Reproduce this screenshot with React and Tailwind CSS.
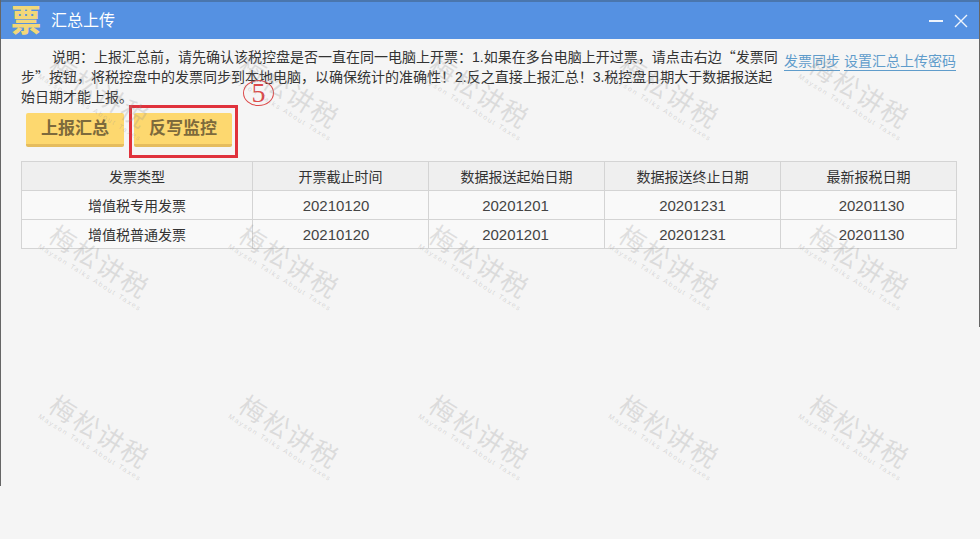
import React from "react";

const FONT = { fontFamily: '"Liberation Sans", "Noto Sans CJK SC", sans-serif' };

const rows = [
  ["增值税专用发票", "20210120", "20201201", "20201231", "20201130"],
  ["增值税普通发票", "20210120", "20201201", "20201231", "20201130"],
];
const head = ["发票类型", "开票截止时间", "数据报送起始日期", "数据报送终止日期", "最新报税日期"];
const digitOffset = ["", "pr-[9px]", "pr-[2px]", "", "pl-[6px]"];

const wmX = [45, 235, 425, 615, 805];
const wmY = [79, 249, 419];

function Watermark({ left, top }) {
  return (
    <div
      className="absolute w-[104px] origin-center rotate-[32deg] text-center leading-none pointer-events-none"
      style={{ left, top }}
    >
      <div className="-ml-[8px] w-[120px] text-[26px] font-normal tracking-[2px] text-[#8f8f8f]/25 whitespace-nowrap">梅松讲税</div>
      <div className="mt-[1px] -ml-[8px] w-[120px] text-[7px] tracking-[1.6px] text-[#8f8f8f]/30 whitespace-nowrap">Mayson Talks About Taxes</div>
    </div>
  );
}

function Row({ cells, className }) {
  return (
    <div className={`grid grid-cols-[230px_176px_176px_176px_176px] ${className}`}>
      {cells.map((c, i) => (
        <div
          key={i}
          className={`flex items-center justify-center pt-[3px] ${i > 0 ? "border-l border-[#d4d4d4]" : ""} ${/^\d/.test(c) ? `text-[15px] text-[#444444] ${digitOffset[i]}` : ""}`}
        >
          {c}
        </div>
      ))}
    </div>
  );
}

const Q = ({ children }) => <span className="font-['Noto_Sans_CJK_SC',sans-serif] leading-none">{children}</span>;

export default function App() {
  return (
    <div style={FONT} className="relative h-[539px] w-[980px] overflow-hidden bg-[#f5f5f5] text-[14px] text-[#333333]">
      <div className="flex h-[39px] items-center justify-between border-t-2 border-[#4a76ad] bg-[#5591e2] pl-[11px] pr-[12px]">
        <div className="flex items-center">
          <span className="w-[30px] text-center text-[30px] font-black leading-none text-[#f2d778]">票</span>
          <span className="ml-[10px] text-[16px] text-white">汇总上传</span>
        </div>
        <div className="flex items-center gap-[11px]">
          <span className="h-[2px] w-[14px] bg-white/90" />
          <svg width="14" height="14" viewBox="0 0 14 14" className="text-white/90">
            <path d="M1 1 L13 13 M13 1 L1 13" stroke="currentColor" strokeWidth="1.4" fill="none" />
          </svg>
        </div>
      </div>

      <div className="flex flex-col pl-[21px] pr-[23px]">
        <div className="flex h-[66px] items-start pt-[8px]">
          <p className="w-[758px] indent-[31px] text-[14px] leading-[20px]">
            说明：上报汇总前，请先确认该税控盘是否一直在同一电脑上开票：1.如果在多台电脑上开过票，请点击右边<Q>“</Q>发票同步<Q>”</Q>按钮，将税控盘中的发票同步到本地电脑，以确保统计的准确性！2.反之直接上报汇总！3.税控盘日期大于数据报送起始日期才能上报。
          </p>
          <div className="ml-[5px] mt-[5px] flex gap-[4px] whitespace-nowrap text-[14px] leading-[18px] text-[#5f9ccb]">
            <a className="border-b border-[#5f9ccb]">发票同步</a>
            <a className="border-b border-[#5f9ccb]">设置汇总上传密码</a>
          </div>
        </div>

        <div className="ml-[5px] mt-[8px] flex gap-[10px]">
          <button className="h-[34px] w-[98px] rounded-[2px] border-b-[3px] border-[#e5bc5d] bg-[#fdd86f] text-[17px] font-bold text-[#7d6a3c]">上报汇总</button>
          <button className="h-[34px] w-[98px] rounded-[2px] border-b-[3px] border-[#e5bc5d] bg-[#fdd86f] text-[17px] font-bold text-[#7d6a3c]">反写监控</button>
        </div>

        <div className="mt-[14px] w-[936px] border border-[#d4d4d4] text-[14px]">
          <Row cells={head} className="h-[28px] bg-[#efefef]" />
          {rows.map((r) => (
            <Row key={r[0]} cells={r} className="h-[29px] border-t border-[#d4d4d4] bg-[#f9f9f9]" />
          ))}
        </div>
      </div>

      <div className="absolute left-[129px] top-[105px] h-[53px] w-[109px] border-[3px] border-[#e0323c]" />
      <span className="absolute left-[243px] top-[80px] flex h-[26px] w-[31px] items-center justify-center rounded-[50%] border border-[#dc4a4a] font-['Liberation_Serif',serif] text-[28px] leading-none text-[#dc4a4a]">5</span>

      <div className="absolute left-0 top-0 h-[486px] w-px bg-[#666666]" />
      <div className="absolute right-0 top-0 h-[327px] w-px bg-[#666666]" />

      {wmY.map((y) => wmX.map((x) => <Watermark key={`${x}-${y}`} left={x} top={y} />))}
    </div>
  );
}
